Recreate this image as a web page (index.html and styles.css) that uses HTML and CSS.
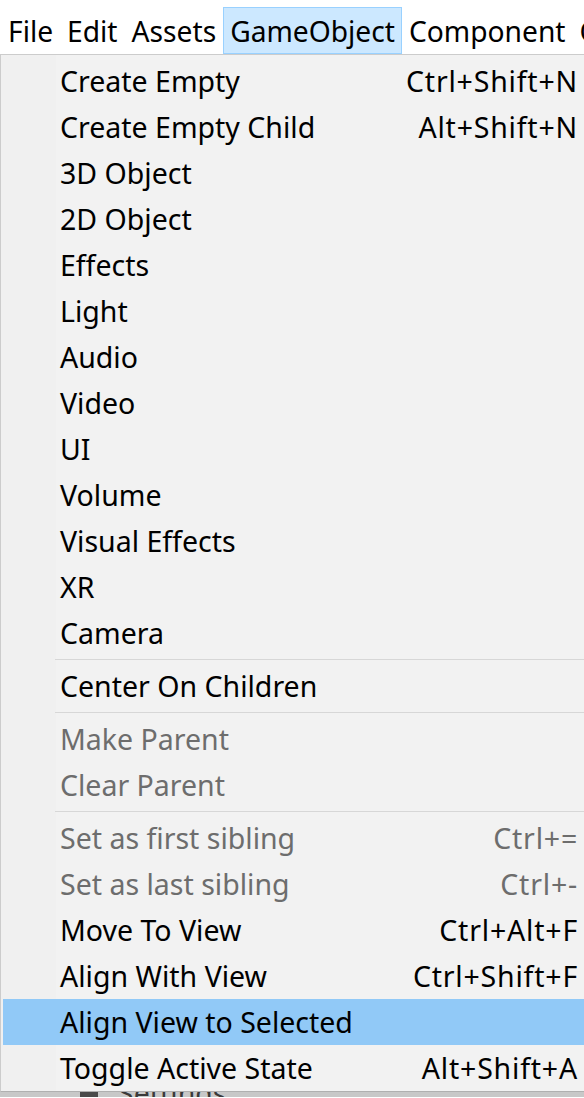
FILE: index.html
```html
<!DOCTYPE html>
<html lang="en">
<head>
<meta charset="utf-8">
<title>GameObject menu</title>
<link rel="stylesheet" href="styles.css">
</head>
<body>
<div class="menubar">
  <span class="mb-item">File</span>
  <span class="mb-item">Edit</span>
  <span class="mb-item">Assets</span>
  <span class="mb-item active">GameObject</span>
  <span class="mb-item">Component</span>
  <span class="mb-item">Cinemachine</span>
</div>
<div class="menu">
  <div class="row"><span class="label">Create Empty</span><span class="key">Ctrl+Shift+N</span></div>
  <div class="row"><span class="label">Create Empty Child</span><span class="key">Alt+Shift+N</span></div>
  <div class="row"><span class="label">3D Object</span></div>
  <div class="row"><span class="label">2D Object</span></div>
  <div class="row"><span class="label">Effects</span></div>
  <div class="row"><span class="label">Light</span></div>
  <div class="row"><span class="label">Audio</span></div>
  <div class="row"><span class="label">Video</span></div>
  <div class="row"><span class="label">UI</span></div>
  <div class="row"><span class="label">Volume</span></div>
  <div class="row"><span class="label">Visual Effects</span></div>
  <div class="row"><span class="label">XR</span></div>
  <div class="row"><span class="label">Camera</span></div>
  <div class="sep"></div>
  <div class="row"><span class="label">Center On Children</span></div>
  <div class="sep"></div>
  <div class="row disabled"><span class="label">Make Parent</span></div>
  <div class="row disabled"><span class="label">Clear Parent</span></div>
  <div class="sep"></div>
  <div class="row disabled"><span class="label">Set as first sibling</span><span class="key">Ctrl+=</span></div>
  <div class="row disabled"><span class="label">Set as last sibling</span><span class="key">Ctrl+-</span></div>
  <div class="row"><span class="label">Move To View</span><span class="key">Ctrl+Alt+F</span></div>
  <div class="row"><span class="label">Align With View</span><span class="key">Ctrl+Shift+F</span></div>
  <div class="row hover"><span class="label">Align View to Selected</span></div>
  <div class="row"><span class="label">Toggle Active State</span><span class="key">Alt+Shift+A</span></div>
</div>
<div class="behind">
  <div class="behind-row"><span class="b-icon"></span><span class="b-text">Settings</span></div>
</div>
</body>
</html>
```
FILE: styles.css
```css
html, body {
  margin: 0;
  padding: 0;
  background: #ffffff;
  overflow: hidden;
  height: 1098px;
}
body {
  font-family: "Noto Sans", "Open Sans", sans-serif;
  font-size: 28.5px;
  color: #000;
}
.menubar {
  display: flex;
  padding-top: 7px;
  height: 47px;
  white-space: nowrap;
  background: #fff;
  font-size: 28.2px;
}
.mb-item {
  display: flex;
  align-items: center;
  padding: 0 6px;
  border: 1px solid transparent;
  height: 45px;
}
.mb-item:first-child {
  padding-left: 7px;
}
.mb-item.active {
  background: #cce8ff;
  border-color: #99d1ff;
}
.menu {
  border-top: 1px solid #cccccc;
  border-left: 1px solid #cccccc;
  border-bottom: 1px solid #b0b0b0;
  padding: 3px 0 0 2px;
  height: 1033px;
  background: linear-gradient(to right, #f0f0f0 55px, #f2f2f2 55px);
}
.row {
  display: flex;
  align-items: center;
  justify-content: space-between;
  height: 46px;
  padding: 0 6px 0 57px;
  white-space: nowrap;
}
.key {
  letter-spacing: 0.8px;
}
.row.disabled {
  color: #6d6d6d;
}
.row.hover {
  background: #91c9f7;
}
.sep {
  height: 1px;
  margin: 3px 0 3px 52px;
  background: #d7d7d7;
}
.behind {
  height: 5px;
  overflow: hidden;
  background: #c8c8c8;
}
.behind-row {
  display: flex;
  align-items: center;
  margin-top: -18px;
  padding-left: 80px;
  gap: 20px;
}
.b-icon {
  width: 18px;
  height: 20px;
  background: #4a4a4a;
}
.b-text {
  color: #3a3a3a;
}
```
